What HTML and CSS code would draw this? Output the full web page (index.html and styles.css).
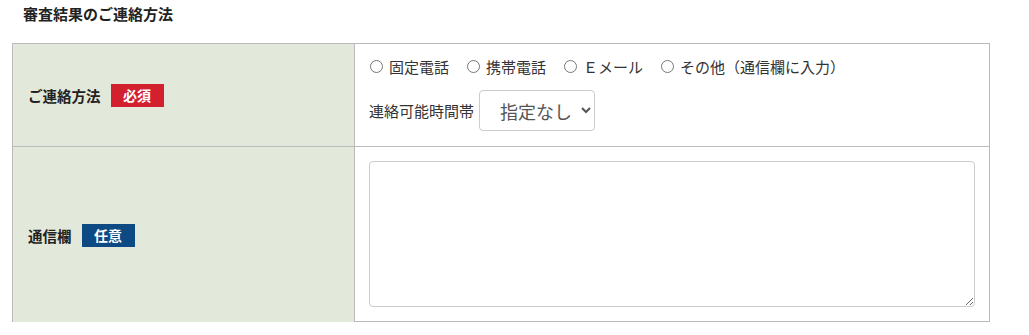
FILE: index.html
```html
<!DOCTYPE html>
<html lang="ja">
<head>
<meta charset="utf-8">
<title>審査結果のご連絡方法</title>
<link rel="stylesheet" href="styles.css">
</head>
<body>
<h2 class="title">審査結果のご連絡方法</h2>
<div class="form-table">
  <div class="row row-method">
    <div class="head">
      <span class="label">ご連絡方法</span>
      <span class="badge badge-req">必須</span>
    </div>
    <div class="body">
      <div class="radios">
        <label class="radio"><input type="radio" name="m"><span>固定電話</span></label>
        <label class="radio"><input type="radio" name="m"><span>携帯電話</span></label>
        <label class="radio"><input type="radio" name="m"><span>Ｅメール</span></label>
        <label class="radio"><input type="radio" name="m"><span>その他（通信欄に入力）</span></label>
      </div>
      <div class="time">
        <span class="time-label">連絡可能時間帯</span>
        <select class="select"><option>指定なし</option></select>
      </div>
    </div>
  </div>
  <div class="row row-msg">
    <div class="head">
      <span class="label">通信欄</span>
      <span class="badge badge-opt">任意</span>
    </div>
    <div class="body body-msg">
      <textarea class="textarea"></textarea>
    </div>
  </div>
</div>
</body>
</html>
```
FILE: styles.css
```css
* { box-sizing: border-box; }
body {
  margin: 0;
  padding: 0 40px 0 12px;
  font-family: "Noto Sans CJK JP", "Noto Sans", sans-serif;
  color: #222;
  background: #fff;
}
.title {
  margin: 0;
  padding: 3px 0 0 11px;
  font-size: 15px;
  font-weight: 700;
  line-height: 22px;
  height: 43px;
  color: #222;
}
.form-table {
  width: 978px;
  border: 1px solid #bbb;
}
.row {
  display: grid;
  grid-template-columns: 342px 1fr;
}
.row + .row { border-top: 1px solid #bbb; }
.row-method { height: 102px; }
.row-msg { height: 175px; }
.head {
  background: #e2e8da;
  border-right: 1px solid #bbb;
  display: flex;
  align-items: center;
  padding-left: 15px;
  gap: 10px;
}
.row-msg .head { padding-top: 1px; }
.label {
  font-size: 14.5px;
  font-weight: 700;
  color: #222;
}
.badge {
  display: inline-block;
  color: #fff;
  font-size: 14px;
  font-weight: 700;
  line-height: 23px;
  height: 23px;
  width: 53px;
  text-align: center;
}
.badge-req { background: #d3202e; }
.badge-opt { background: #0d4a84; }
.body {
  padding: 11px 14px 15px 14px;
}
.body-msg { padding-top: 14px; }
.radios {
  display: flex;
  align-items: center;
  height: 22px;
  font-size: 15px;
  color: #333;
  gap: 17px;
}
.radio {
  display: inline-flex;
  align-items: center;
  gap: 6px;
}
.radio input {
  margin: 0 0 0 1px;
  width: 13px;
  height: 13px;
}
.time {
  display: flex;
  align-items: center;
  margin-top: 13px;
  gap: 5px;
}
.time-label {
  font-size: 15px;
  color: #333;
}
.select {
  width: 116px;
  height: 41px;
  font-family: inherit;
  font-size: 18px;
  font-weight: 400;
  color: #555;
  background: #fff;
  border: 1px solid #ccc;
  border-radius: 4px;
  padding: 0 2px 0 16px;
}
.textarea {
  display: block;
  width: 606px;
  height: 146px;
  border: 1px solid #ccc;
  border-radius: 4px;
  resize: both;
  font-family: inherit;
}
```
